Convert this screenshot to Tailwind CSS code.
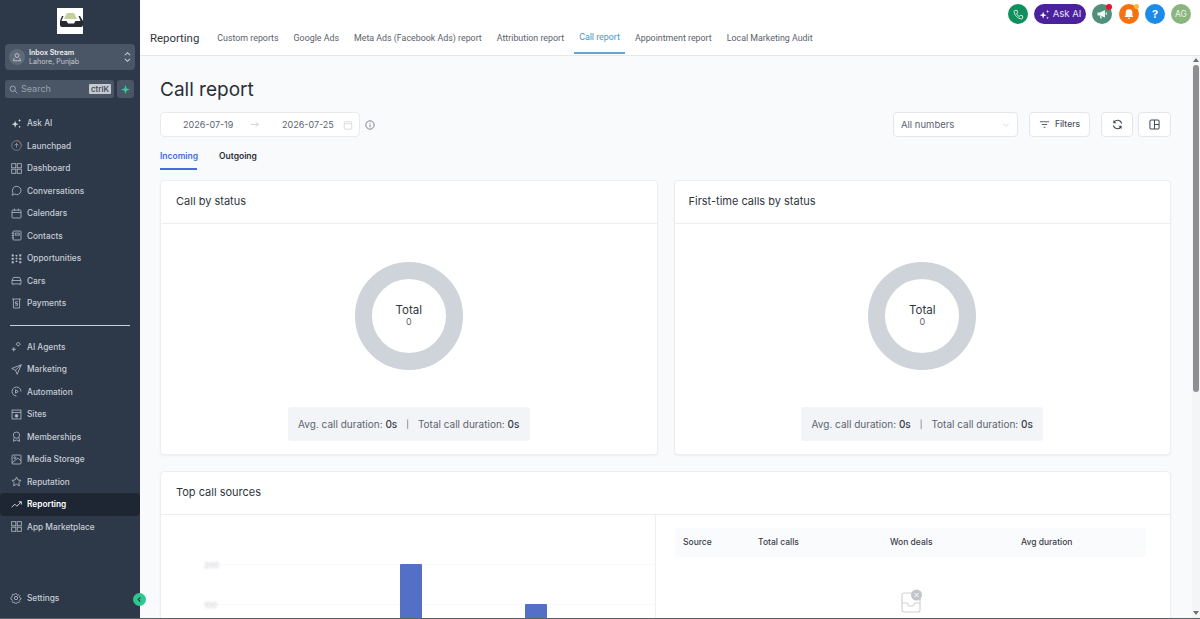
<!doctype html>
<html>
<head>
<meta charset="utf-8">
<script src="https://cdn.jsdelivr.net/npm/@tailwindcss/browser@4"></script>
</head>
<body class="m-0 h-[619px] w-[1200px] overflow-hidden bg-white font-['Inter',sans-serif]">
<div class="flex h-[618px] overflow-hidden">
  <aside class="relative flex w-[140px] shrink-0 flex-col bg-[#2d3848] text-[8.300px] font-medium text-[#c5ccd6]">
    <div class="mt-[8px] flex justify-center">
      <div class="flex h-[26px] w-[26px] items-center justify-center bg-white">
        <svg viewBox="0 0 26 26" class="h-[26px] w-[26px]"><path d="M7 11l3-6h7l3 6z" fill="#c5cf9a"/><path d="M5 8h1.500l-2 5h5l1.500 2.500h6l1.500-2.500h5l-2-5h1.500l3 5v4q0 2-2 2h-19q-2 0-2-2v-4z" fill="#272b2e"/></svg>
      </div>
    </div>
    <div class="mx-[5px] mt-[10px] flex h-[26px] items-center rounded-[4px] bg-[#4a5666] pl-[4px] pr-[3px]">
      <div class="flex h-[16px] w-[16px] items-center justify-center rounded-full bg-[#5f6a79]">
        <svg viewBox="0 0 16 16" class="h-[12px] w-[12px]" fill="none" stroke="#d5dae0" stroke-width="1"><circle cx="8" cy="6" r="2.600"/><path d="M4.500 9.500l-1.500 3.500h10l-1.500-3.500"/></svg>
      </div>
      <div class="ml-[4px] flex-1 leading-[9.500px]">
        <div class="text-[7.100px] font-semibold text-[#eef0f4]">Inbox Stream</div>
        <div class="text-[7.100px] font-normal text-[#c3c9d2]">Lahore, Punjab</div>
      </div>
      <svg viewBox="0 0 10 16" class="h-[14px] w-[9px]" fill="none" stroke="#cfd5dc" stroke-width="1.200"><path d="M2 6l3-3 3 3M2 10l3 3 3-3"/></svg>
    </div>
    <div class="mx-[5px] mt-[10px] flex h-[18px] gap-[3px]">
      <div class="flex w-[109px] items-center rounded-[3px] bg-[#4a5666] pl-[4px] pr-[3px]">
        <svg viewBox="0 0 12 12" class="h-[9px] w-[9px]" fill="none" stroke="#aeb6c1" stroke-width="1.100"><circle cx="5" cy="5" r="3.500"/><path d="M8 8l3 3"/></svg>
        <span class="ml-[3px] flex-1 text-[9px] font-normal text-[#97a1ae]">Search</span>
        <span class="rounded-[1px] bg-[#c5cad1] px-[2px] text-[8px] leading-[10px] text-[#39424f]">ctrlK</span>
      </div>
      <div class="flex w-[17px] items-center justify-center rounded-[3px] bg-[#4a5666]">
        <svg viewBox="0 0 12 12" class="h-[9px] w-[9px]"><path d="M6 0l1.500 4.500L12 6 7.500 7.500 6 12 4.500 7.500 0 6l4.500-1.500z" fill="#37ca97"/></svg>
      </div>
    </div>
    <nav class="mt-[14px] flex flex-col">
      <a class="flex h-[22.5px] items-center pl-[11px]"><svg viewBox="0 0 16 16" class="mr-[5px] h-[11px] w-[11px]" fill="#d5dae0"><path d="M6 4l1.300 3.700L11 9 7.300 10.300 6 14 4.700 10.300 1 9l3.700-1.300zM12.500 1l.6 1.900 1.900.6-1.900.6-.6 1.900-.6-1.900-1.900-.6 1.900-.6zM12.500 11l.5 1.500 1.500.5-1.500.5-.5 1.500-.5-1.500-1.500-.5 1.500-.5z"/></svg>Ask AI</a>
      <a class="flex h-[22.5px] items-center pl-[11px]"><svg viewBox="0 0 16 16" class="mr-[5px] h-[11px] w-[11px]" fill="none" stroke="#8a94a2" stroke-width="1"><circle cx="8" cy="8" r="7"/><path d="M8 1a7 7 0 0 1 7 7" stroke="#c96b43"/><path d="M5 8l3-3 3 3M8 5v6" stroke="#aab2bd"/></svg>Launchpad</a>
      <a class="flex h-[22.5px] items-center pl-[11px]"><svg viewBox="0 0 16 16" class="mr-[5px] h-[11px] w-[11px]" fill="none" stroke="#b4bbc6" stroke-width="1.200"><rect x="1" y="1" width="6" height="6"/><rect x="9" y="1" width="6" height="6"/><rect x="1" y="9" width="6" height="6"/><rect x="9" y="9" width="6" height="6"/></svg>Dashboard</a>
      <a class="flex h-[22.5px] items-center pl-[11px]"><svg viewBox="0 0 16 16" class="mr-[5px] h-[11px] w-[11px]" fill="none" stroke="#b4bbc6" stroke-width="1.200"><path d="M8.500 2a6 6 0 1 1-3 11.200L1.500 15l1.300-4A6 6 0 0 1 8.500 2z"/></svg>Conversations</a>
      <a class="flex h-[22.5px] items-center pl-[11px]"><svg viewBox="0 0 16 16" class="mr-[5px] h-[11px] w-[11px]" fill="none" stroke="#b4bbc6" stroke-width="1.200"><rect x="1.500" y="3" width="13" height="11.500" rx="1"/><path d="M1.500 6.500h13M5 1v3M11 1v3"/></svg>Calendars</a>
      <a class="flex h-[22.5px] items-center pl-[11px]"><svg viewBox="0 0 16 16" class="mr-[5px] h-[11px] w-[11px]" fill="none" stroke="#b4bbc6" stroke-width="1.200"><rect x="3" y="1.500" width="11.500" height="13" rx="1"/><path d="M6 4.500h6v3H6zM1 4.500h3M1 8h3M1 11.500h3"/></svg>Contacts</a>
      <a class="flex h-[22.5px] items-center pl-[11px]"><svg viewBox="0 0 16 16" class="mr-[5px] h-[11px] w-[11px]" fill="#b4bbc6"><path d="M8 2.500l2 1.500-2 1.500-2-1.500zM8 6.500l2 1.500-2 1.500-2-1.500zM8 10.500l2 1.500-2 1.500-2-1.500z"/><rect x="1" y="2" width="3" height="3"/><rect x="12" y="2" width="3" height="3"/><rect x="1" y="7" width="3" height="3"/><rect x="12" y="7" width="3" height="3"/><rect x="1" y="12" width="3" height="3"/><rect x="12" y="12" width="3" height="3"/></svg>Opportunities</a>
      <a class="flex h-[22.5px] items-center pl-[11px]"><svg viewBox="0 0 16 16" class="mr-[5px] h-[11px] w-[11px]" fill="none" stroke="#b4bbc6" stroke-width="1.200"><path d="M1.500 8l2-4.500h9l2 4.500v5h-13zM1.500 8h13M3 13v1.500M13 13v1.500"/></svg>Cars</a>
      <a class="flex h-[22.5px] items-center pl-[11px]"><svg viewBox="0 0 16 16" class="mr-[5px] h-[11px] w-[11px]" fill="none" stroke="#b4bbc6" stroke-width="1.200"><path d="M1.500 1.500h13M3.500 1.500v13h9v-13M10 5.500H6.500v2.500H9.500v2.500H6"/></svg>Payments</a>
      <div class="mx-[10px] my-[10px] h-px bg-[#c9d0d9]"></div>
      <a class="flex h-[22.5px] items-center pl-[11px]"><svg viewBox="0 0 16 16" class="mr-[5px] h-[11px] w-[11px]" fill="none" stroke="#c0c6cf" stroke-width="1.200"><path d="M10.500 1.500l3 3-3 3-3-3zM4 9v6M1 12h6"/></svg>AI Agents</a>
      <a class="flex h-[22.5px] items-center pl-[11px]"><svg viewBox="0 0 16 16" class="mr-[5px] h-[11px] w-[11px]" fill="none" stroke="#b4bbc6" stroke-width="1.200"><path d="M15 1L1 6.500l5.500 2.500L9 15zM15 1L6.500 9"/></svg>Marketing</a>
      <a class="flex h-[22.5px] items-center pl-[11px]"><svg viewBox="0 0 16 16" class="mr-[5px] h-[11px] w-[11px]" fill="none" stroke="#b4bbc6" stroke-width="1.200"><path d="M14.500 8A6.500 6.500 0 1 0 8 14.500M6.500 5.500l4 2.500-4 2.500z"/></svg>Automation</a>
      <a class="flex h-[22.5px] items-center pl-[11px]"><svg viewBox="0 0 16 16" class="mr-[5px] h-[11px] w-[11px]" fill="none" stroke="#b4bbc6" stroke-width="1.200"><rect x="1.500" y="1.500" width="13" height="13"/><path d="M1.500 5h13"/><circle cx="8" cy="10" r="2" fill="#b4bbc6"/></svg>Sites</a>
      <a class="flex h-[22.5px] items-center pl-[11px]"><svg viewBox="0 0 16 16" class="mr-[5px] h-[11px] w-[11px]" fill="none" stroke="#b4bbc6" stroke-width="1.200"><circle cx="8" cy="6" r="4.500"/><path d="M4.500 9.500L3.500 15 8 13l4.500 2-1-5.500"/></svg>Memberships</a>
      <a class="flex h-[22.5px] items-center pl-[11px]"><svg viewBox="0 0 16 16" class="mr-[5px] h-[11px] w-[11px]" fill="none" stroke="#b4bbc6" stroke-width="1.200"><rect x="1.500" y="1.500" width="13" height="13" rx="1"/><circle cx="5.500" cy="5.500" r="1.500"/><path d="M1.500 13L10 6l4.500 4"/></svg>Media Storage</a>
      <a class="flex h-[22.5px] items-center pl-[11px]"><svg viewBox="0 0 16 16" class="mr-[5px] h-[11px] w-[11px]" fill="none" stroke="#b4bbc6" stroke-width="1.200"><path d="M8 1.500l2 4.300 4.700.6-3.400 3.200.9 4.700L8 12l-4.200 2.300.9-4.700L1.300 6.400 6 5.800z"/></svg>Reputation</a>
      <a class="flex h-[22.5px] items-center rounded-[4px] bg-[#1e2533] pl-[11px] font-semibold text-white"><svg viewBox="0 0 16 16" class="mr-[5px] h-[11px] w-[11px]" fill="none" stroke="#f0f2f5" stroke-width="1.200"><path d="M1 12l4.500-4.500 3 3L15 4M11 4h4v4"/></svg>Reporting</a>
      <a class="flex h-[22.5px] items-center pl-[11px]"><svg viewBox="0 0 16 16" class="mr-[5px] h-[11px] w-[11px]" fill="none" stroke="#b4bbc6" stroke-width="1.200"><rect x="1" y="1" width="6" height="6"/><rect x="9" y="1" width="6" height="6"/><rect x="1" y="9" width="6" height="6"/><rect x="9" y="9" width="6" height="6"/></svg>App Marketplace</a>
    </nav>
    <a class="mt-auto mb-[9px] flex h-[22.5px] items-center pl-[10px]"><svg viewBox="0 0 16 16" class="mr-[5px] h-[12px] w-[12px]" fill="none" stroke="#b4bbc6" stroke-width="1.200"><circle cx="8" cy="8" r="2.200"/><path d="M6.800 1h2.400l.4 2 1.600.7 1.800-1.100 1.700 1.700-1.100 1.800.7 1.600 2 .4v2.400l-2 .4-.7 1.600 1.100 1.800-1.700 1.700-1.800-1.100-1.600.7-.4 2H6.800l-.4-2-1.600-.7-1.800 1.100-1.700-1.700 1.100-1.800-.7-1.600-2-.4V6.900l2-.4.7-1.600-1.100-1.800 1.700-1.700 1.800 1.100 1.600-.7z" transform="translate(1.500 1.500) scale(.8)"/></svg>Settings</a>
    <div class="absolute left-[133px] top-[593px] z-10 flex h-[13px] w-[13px] items-center justify-center rounded-full bg-[#2dc78f]">
      <svg viewBox="0 0 8 8" class="h-[7px] w-[7px]" fill="none" stroke="#1e3a33" stroke-width="1.300"><path d="M5 1.500L2.500 4 5 6.500"/></svg>
    </div>
  </aside>
  <div class="flex min-w-0 flex-1 flex-col">
    <header class="flex h-[56px] shrink-0 items-start border-b border-[#e5e7eb] bg-white shadow-[0_1px_2px_rgba(0,0,0,0.05)]">
      <div class="flex h-[54px] flex-1 items-center pl-[10px] pt-[24px] font-['Roboto',sans-serif]">
        <div class="mr-[18px] text-[11.400px] text-[#2f3640]">Reporting</div>
        <nav class="flex h-full text-[8.850px] text-[#5a626d]">
          <a class="mr-[15px] flex items-center">Custom reports</a>
          <a class="mr-[15px] flex items-center">Google Ads</a>
          <a class="mr-[15px] flex items-center">Meta Ads (Facebook Ads) report</a>
          <a class="mr-[10px] flex items-center">Attribution report</a>
          <a class="mr-[10px] flex items-center border-b-2 border-[#5aa9d9] px-[5px] text-[#3d99d4]">Call report</a>
          <a class="mr-[15px] flex items-center">Appointment report</a>
          <a class="flex items-center">Local Marketing Audit</a>
        </nav>
      </div>
      <div class="flex h-[28px] items-center gap-[6px] pr-[9px]">
        <div class="flex h-[20px] w-[20px] items-center justify-center rounded-full bg-[#0f8f5c]"><svg viewBox="0 0 16 16" class="h-[11px] w-[11px]" fill="none" stroke="#e8f5ee" stroke-width="1.300"><path d="M3 2h3l1 3.500-2 1.200a8 8 0 0 0 4.300 4.300l1.200-2L14 10v3c0 1-1 1.500-2 1.400C7 14 2 9 1.600 4c0-1 .4-2 1.400-2z"/></svg></div>
        <div class="flex h-[20px] w-[52px] items-center justify-center gap-[3px] rounded-full bg-[#4a229d] text-[9.500px] text-[#e7e1f5]"><svg viewBox="0 0 16 16" class="h-[11px] w-[11px]" fill="#fff"><path d="M6 4l1.300 3.700L11 9 7.300 10.300 6 14 4.700 10.300 1 9l3.700-1.300zM12.500 1l.6 1.900 1.900.6-1.900.6-.6 1.900-.6-1.900-1.900-.6 1.900-.6zM12.500 11l.5 1.500 1.500.5-1.500.5-.5 1.500-.5-1.500-1.500-.5 1.500-.5z"/></svg>Ask AI</div>
        <div class="relative mr-[1px] flex h-[20px] w-[20px] items-center justify-center rounded-full bg-[#4f8f7b]"><svg viewBox="0 0 16 16" class="h-[12px] w-[12px]" fill="#eef6f2"><path d="M2 6h3l7-3.500v10L5 10H2zM5 10.500l1 3.500h2l-1-3z"/><rect x="13" y="6" width="1.500" height="3"/></svg><span class="absolute right-0 top-0 h-[6px] w-[6px] rounded-full bg-[#e8142a]"></span></div>
        <div class="relative flex h-[20px] w-[20px] items-center justify-center rounded-full bg-[#f5720f]"><svg viewBox="0 0 16 16" class="h-[12px] w-[12px]" fill="#fff"><path d="M8 1.500a4.500 4.500 0 0 1 4.500 4.500v4l1.500 2H2l1.500-2V6A4.500 4.500 0 0 1 8 1.500zM6.500 13h3a1.500 1.500 0 0 1-3 0z"/></svg><span class="absolute right-0 top-0 h-[5px] w-[5px] rounded-full bg-[#f5b93a]"></span></div>
        <div class="flex h-[20px] w-[20px] items-center justify-center rounded-full bg-[#1c8ce8] text-[11px] font-bold text-white">?</div>
        <div class="flex h-[20px] w-[20px] items-center justify-center rounded-full bg-[#8bb57f] text-[8.500px] text-[#eef4ea]">AG</div>
      </div>
    </header>
    <div class="relative flex min-h-0 flex-1">
      <main class="min-w-0 flex-1 overflow-hidden bg-[#f9fafc] pl-[20px] pr-[21px]">
        <h1 class="mt-[19px] text-[19px] leading-[30px] font-normal text-[#2a2f36]">Call report</h1>
        <div class="mt-[7px] flex h-[25px] items-center whitespace-nowrap text-[9px] text-[#5c6470]">
          <div class="flex h-[25px] w-[200px] shrink-0 items-center rounded-[4px] border border-[#e8eaee] bg-white pl-[22px]">
            <span class="w-[46px]">2026-07-19</span>
            <svg viewBox="0 0 12 12" class="ml-[21px] h-[9px] w-[9px]" fill="none" stroke="#c4c8ce"><path d="M1 6h10M7.500 2.500L11 6l-3.500 3.500"/></svg>
            <span class="ml-[23px] w-[46px]">2026-07-25</span>
            <svg viewBox="0 0 12 12" class="ml-[15px] h-[10px] w-[10px]" fill="none" stroke="#d3d6db"><rect x="1.500" y="2" width="9" height="9" rx="1"/><path d="M1.500 4.500h9"/></svg>
          </div>
          <svg viewBox="0 0 12 12" class="ml-[5px] h-[10px] w-[10px]" fill="none" stroke="#666d77"><circle cx="6" cy="6" r="5"/><path d="M6 5.500v3.200M6 3.300v1"/></svg>
          <div class="ml-auto flex h-[25px] w-[125px] items-center justify-between rounded-[4px] border border-[#e3e6ea] bg-white pl-[7px] pr-[7px] pt-[1px] text-[9.500px]">All numbers<svg viewBox="0 0 12 12" class="h-[8px] w-[8px]" fill="none" stroke="#c4c8ce"><path d="M2 4l4 4 4-4"/></svg></div>
          <div class="ml-[11px] flex h-[25px] w-[61px] items-center justify-center gap-[5px] rounded-[4px] border border-[#e3e6ea] bg-white text-[8.500px] font-medium text-[#4a525d]"><svg viewBox="0 0 12 12" class="h-[11px] w-[11px]" fill="none" stroke="#4a525d"><path d="M1 3h10M3 6h6M5 9h2"/></svg>Filters</div>
          <div class="ml-[11px] flex h-[25px] w-[32px] items-center justify-center rounded-[4px] border border-[#e3e6ea] bg-white"><svg viewBox="0 0 12 12" class="h-[11px] w-[11px]" fill="none" stroke="#434a54" stroke-width="1.100"><path d="M10.500 5A4.500 4.500 0 0 0 2 4M1.500 7A4.500 4.500 0 0 0 10 8M2 1.500V4h2.500M10 10.500V8H7.500"/></svg></div>
          <div class="ml-[5px] flex h-[25px] w-[33px] items-center justify-center rounded-[4px] border border-[#e3e6ea] bg-white"><svg viewBox="0 0 12 12" class="h-[11px] w-[11px]" fill="none" stroke="#434a54" stroke-width="1.100"><rect x="1" y="1" width="10" height="10" rx="1.500"/><path d="M6 1v10M6 6h5"/></svg></div>
        </div>
        <div class="mt-[9px] flex h-[35px] text-[8.500px] font-semibold">
          <a class="flex h-[24px] w-[37px] items-center border-b-2 border-[#3f6fd8] pb-[2px] text-[#3f6fd8]">Incoming</a>
          <a class="ml-[22px] flex h-[24px] items-center border-b-2 border-transparent pb-[2px] text-[#2a2f38]">Outgoing</a>
        </div>
        <div class="-mt-[1px] grid grid-cols-2 gap-[16px]">
          <section class="h-[275px] rounded-[4px] border border-[#eceef1] bg-white shadow-[0_1px_2px_rgba(0,0,0,0.05)]">
            <div class="flex h-[43px] items-center border-b border-[#eceef1] pb-[2px] pl-[15px] text-[11px] font-normal text-[#2f3640]">Call by status</div>
            <div class="relative mx-auto mt-[38px] h-[108px] w-[108px]">
              <svg viewBox="0 0 108 108" class="h-full w-full"><circle cx="54" cy="54" r="45.500" fill="none" stroke="#cfd4da" stroke-width="17"/></svg>
              <div class="absolute inset-0 flex flex-col items-center justify-center pb-[3px] text-center"><div class="text-[11.500px] leading-[14px] text-[#2f3640]">Total</div><div class="text-[9px] leading-[10px] text-[#5c6470]">0</div></div>
            </div>
            <div class="mx-auto mt-[37px] flex h-[34px] w-[242px] items-center justify-center rounded-[3px] bg-[#f2f4f7] text-[10px] text-[#5c6470]">Avg. call duration:&nbsp;<b class="font-medium text-[#3a414b]">0s</b><span class="mx-[9px] text-[8px]">|</span>Total call duration:&nbsp;<b class="font-medium text-[#3a414b]">0s</b></div>
          </section>
          <section class="h-[275px] rounded-[4px] border border-[#eceef1] bg-white shadow-[0_1px_2px_rgba(0,0,0,0.05)]">
            <div class="flex h-[43px] items-center border-b border-[#eceef1] pb-[2px] pl-[14px] text-[11px] font-normal text-[#2f3640]">First-time calls by status</div>
            <div class="relative mx-auto mt-[38px] h-[108px] w-[108px]">
              <svg viewBox="0 0 108 108" class="h-full w-full"><circle cx="54" cy="54" r="45.500" fill="none" stroke="#cfd4da" stroke-width="17"/></svg>
              <div class="absolute inset-0 flex flex-col items-center justify-center pb-[3px] text-center"><div class="text-[11.500px] leading-[14px] text-[#2f3640]">Total</div><div class="text-[9px] leading-[10px] text-[#5c6470]">0</div></div>
            </div>
            <div class="mx-auto mt-[37px] flex h-[34px] w-[242px] items-center justify-center rounded-[3px] bg-[#f2f4f7] text-[10px] text-[#5c6470]">Avg. call duration:&nbsp;<b class="font-medium text-[#3a414b]">0s</b><span class="mx-[9px] text-[8px]">|</span>Total call duration:&nbsp;<b class="font-medium text-[#3a414b]">0s</b></div>
          </section>
        </div>
        <section class="mt-[16px] h-[300px] rounded-[4px] border border-[#eceef1] bg-white shadow-[0_1px_2px_rgba(0,0,0,0.05)]">
          <div class="flex h-[43px] items-center border-b border-[#eceef1] pb-[2px] pl-[15px] text-[11px] font-normal text-[#2f3640]">Top call sources</div>
          <div class="flex">
            <div class="h-[120px] w-[495px] border-r border-[#eef0f3] pt-[49px] pl-[44px]">
              <div class="relative h-[100px]">
                <div class="flex h-[40px] items-start border-t border-[#fafafb]"><span class="-ml-[1px] -mt-[5px] text-[8px] leading-[10px] text-[#c9cbd0] blur-[1px]">200</span></div>
                <div class="flex h-[40px] items-start border-t border-[#fafafb]"><span class="-ml-[1px] -mt-[5px] text-[8px] leading-[10px] text-[#c9cbd0] blur-[1px]">100</span></div>
                <div class="absolute left-[195px] top-[0px] h-[100px] w-[22px] rounded-t-[1px] bg-[#5470c6] blur-[0.5px]"></div>
                <div class="absolute left-[320px] top-[40px] h-[60px] w-[22px] rounded-t-[1px] bg-[#5470c6] blur-[0.5px]"></div>
              </div>
            </div>
            <div class="flex-1 pl-[19px] pt-[13px]">
              <div class="flex h-[29px] w-[471px] items-center rounded-[2px] bg-[#fafbfc] pb-[1px] pl-[8px] text-[8.500px] font-medium text-[#3a414b]">
                <span class="w-[75px]">Source</span><span class="w-[132px]">Total calls</span><span class="w-[131px]">Won deals</span><span>Avg duration</span>
              </div>
              <div class="ml-[226px] mt-[32px]">
                <svg viewBox="0 0 22 24" class="h-[24px] w-[22px]" fill="none"><rect x="1" y="4" width="18" height="19" rx="2" stroke="#cfd2d6" stroke-width="1.200"/><path d="M1 14h5l2 3h4l2-3h5" stroke="#cfd2d6" stroke-width="1.200"/><circle cx="15.500" cy="6" r="5.500" fill="#c2c5ca"/><path d="M13.500 4l4 4M17.500 4l-4 4" stroke="#fff"/></svg>
              </div>
            </div>
          </div>
        </section>
      </main>
      <div class="flex w-[8px] shrink-0 flex-col items-center bg-[#f4f5f6]">
        <div class="mt-[2px] h-0 w-0 border-x-[3px] border-b-[4px] border-x-transparent border-b-[#6e7074]"></div>
        <div class="mt-[3px] h-[327px] w-[6px] rounded-[3px] bg-[#8d8f92]"></div>
        <div class="mb-[3px] mt-auto h-0 w-0 border-x-[3px] border-t-[4px] border-x-transparent border-t-[#6e7074]"></div>
      </div>
    </div>
  </div>
</div>
<div class="h-px bg-[#5c6066]"></div>
</body>
</html>
